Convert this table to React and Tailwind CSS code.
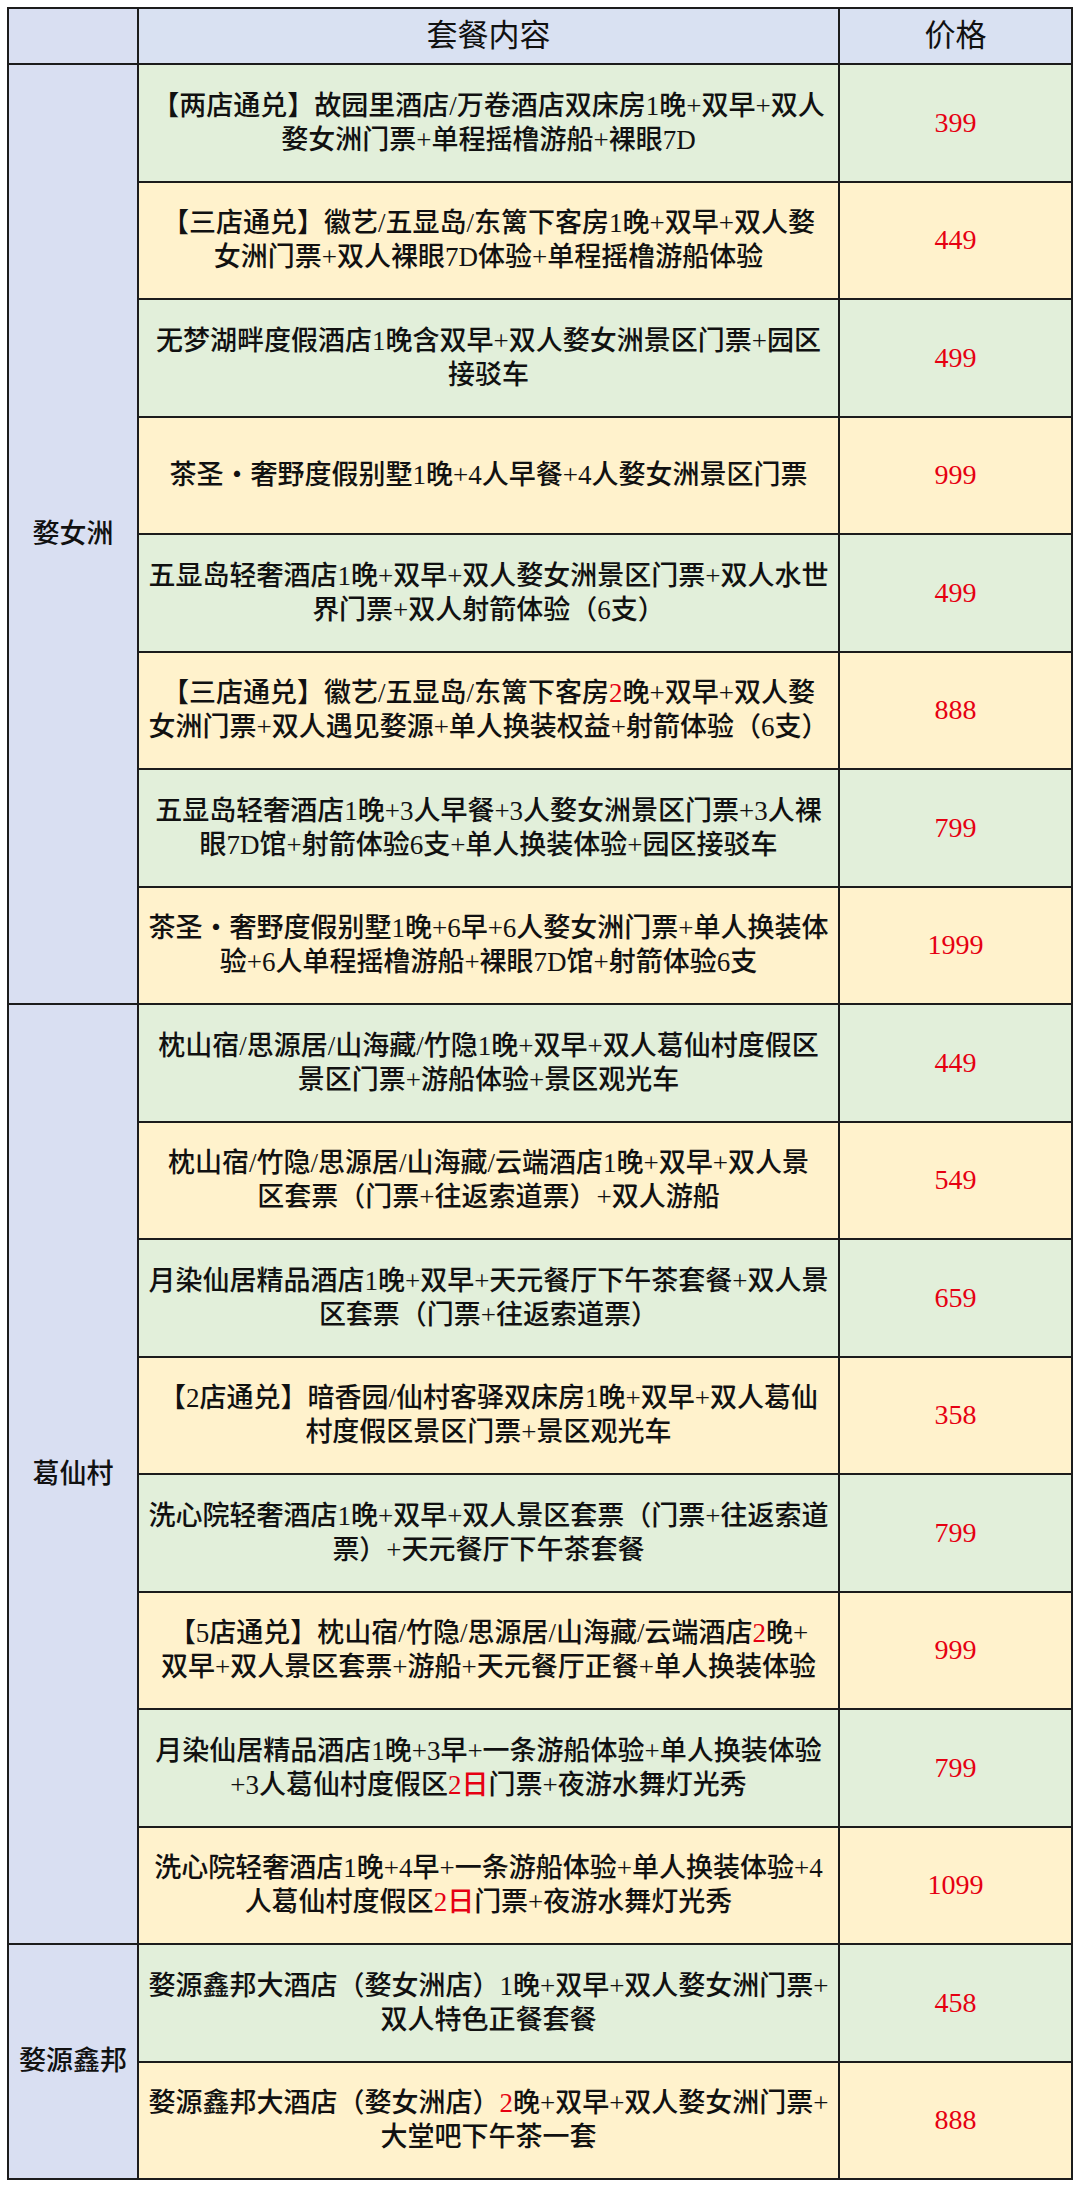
const GREEN = 'bg-[#e2efda]';
const YELLOW = 'bg-[#fff2cc]';

// lines use ^...^ to mark red segments
const groups = [
  {
    name: '婺女洲',
    span: 'row-span-8',
    rows: [
      { lines: ['【两店通兑】故园里酒店/万卷酒店双床房1晚+双早+双人', '婺女洲门票+单程摇橹游船+裸眼7D'], price: '399' },
      { lines: ['【三店通兑】徽艺/五显岛/东篱下客房1晚+双早+双人婺', '女洲门票+双人裸眼7D体验+单程摇橹游船体验'], price: '449' },
      { lines: ['无梦湖畔度假酒店1晚含双早+双人婺女洲景区门票+园区', '接驳车'], price: '499' },
      { lines: ['茶圣・奢野度假别墅1晚+4人早餐+4人婺女洲景区门票'], price: '999' },
      { lines: ['五显岛轻奢酒店1晚+双早+双人婺女洲景区门票+双人水世', '界门票+双人射箭体验（6支）'], price: '499' },
      { lines: ['【三店通兑】徽艺/五显岛/东篱下客房^2^晚+双早+双人婺', '女洲门票+双人遇见婺源+单人换装权益+射箭体验（6支）'], price: '888' },
      { lines: ['五显岛轻奢酒店1晚+3人早餐+3人婺女洲景区门票+3人裸', '眼7D馆+射箭体验6支+单人换装体验+园区接驳车'], price: '799' },
      { lines: ['茶圣・奢野度假别墅1晚+6早+6人婺女洲门票+单人换装体', '验+6人单程摇橹游船+裸眼7D馆+射箭体验6支'], price: '1999' },
    ],
  },
  {
    name: '葛仙村',
    span: 'row-span-8',
    rows: [
      { lines: ['枕山宿/思源居/山海藏/竹隐1晚+双早+双人葛仙村度假区', '景区门票+游船体验+景区观光车'], price: '449' },
      { lines: ['枕山宿/竹隐/思源居/山海藏/云端酒店1晚+双早+双人景', '区套票（门票+往返索道票）+双人游船'], price: '549' },
      { lines: ['月染仙居精品酒店1晚+双早+天元餐厅下午茶套餐+双人景', '区套票（门票+往返索道票）'], price: '659' },
      { lines: ['【2店通兑】暗香园/仙村客驿双床房1晚+双早+双人葛仙', '村度假区景区门票+景区观光车'], price: '358' },
      { lines: ['洗心院轻奢酒店1晚+双早+双人景区套票（门票+往返索道', '票）+天元餐厅下午茶套餐'], price: '799' },
      { lines: ['【5店通兑】枕山宿/竹隐/思源居/山海藏/云端酒店^2^晚+', '双早+双人景区套票+游船+天元餐厅正餐+单人换装体验'], price: '999' },
      { lines: ['月染仙居精品酒店1晚+3早+一条游船体验+单人换装体验', '+3人葛仙村度假区^2日^门票+夜游水舞灯光秀'], price: '799' },
      { lines: ['洗心院轻奢酒店1晚+4早+一条游船体验+单人换装体验+4', '人葛仙村度假区^2日^门票+夜游水舞灯光秀'], price: '1099' },
    ],
  },
  {
    name: '婺源鑫邦',
    span: 'row-span-2',
    rows: [
      { lines: ['婺源鑫邦大酒店（婺女洲店）1晚+双早+双人婺女洲门票+', '双人特色正餐套餐'], price: '458' },
      { lines: ['婺源鑫邦大酒店（婺女洲店）^2^晚+双早+双人婺女洲门票+', '大堂吧下午茶一套'], price: '888' },
    ],
  },
];

function Line({ text }) {
  const parts = text.split('^');
  return (
    <div className="whitespace-nowrap">
      {parts.map((p, i) =>
        i % 2 === 1 ? (
          <span key={i} className="text-[#e60012]">{p}</span>
        ) : (
          <span key={i}>{p}</span>
        )
      )}
    </div>
  );
}

export default function App() {
  let idx = 0;
  return (
    <div className="min-h-screen bg-white pl-[7px] pt-[7px] font-['Liberation_Serif','Noto_Sans_CJK_SC',serif] text-[#111]">
      <div className="grid w-[1066px] grid-cols-[128px_699px_231px] grid-rows-[54px_repeat(18,115.5px)] gap-[2px] border-2 border-[#1c1c1c] bg-[#1c1c1c]">
        <div className="bg-[#d9dff2]" />
        <div className="flex items-center justify-center bg-[#d9e1f2] text-[31px]">套餐内容</div>
        <div className="flex items-center justify-center bg-[#d9e1f2] text-[31px]">价格</div>

        {groups.map((g) => [
          <div key={g.name} className={`${g.span} flex items-center justify-center bg-[#d9dff2] text-[27px] font-medium`}>
            {g.name}
          </div>,
          ...g.rows.flatMap((r) => {
            const bg = idx++ % 2 === 0 ? GREEN : YELLOW;
            return [
              <div key={`c${idx}`} className={`${bg} flex flex-col items-center justify-center text-center text-[27px] leading-[34px] font-medium`}>
                {r.lines.map((l, i) => (
                  <Line key={i} text={l} />
                ))}
              </div>,
              <div key={`p${idx}`} className={`${bg} flex items-center justify-center text-[28px] text-[#e60012]`}>
                {r.price}
              </div>,
            ];
          }),
        ])}
      </div>
    </div>
  );
}
